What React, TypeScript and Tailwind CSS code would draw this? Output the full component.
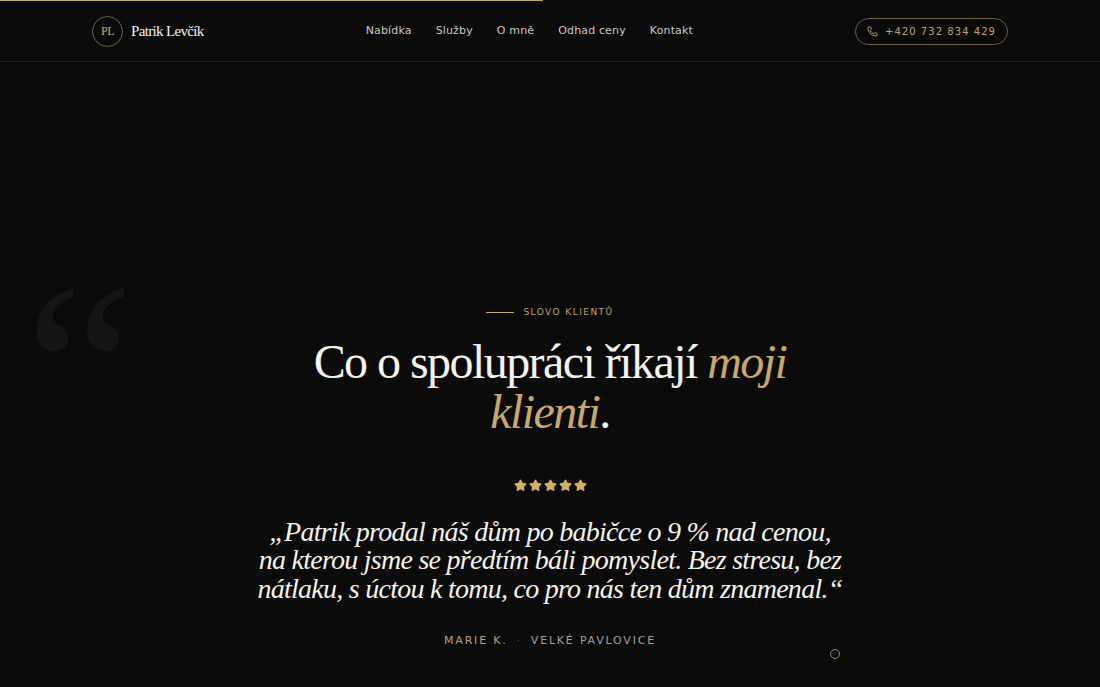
import { Phone, Star } from 'lucide-react';

const navLinks = ['Nabídka', 'Služby', 'O mně', 'Odhad ceny', 'Kontakt'];

export default function App() {
    return (
        <div className="relative h-[687px] w-full overflow-hidden bg-[#0b0b0c] font-['DejaVu_Sans',sans-serif] antialiased">
            {/* Scroll progress */}
            <div className="absolute left-0 top-0 h-px w-[543px] bg-[#c9a96a]" />

            {/* Header */}
            <header className="flex h-[62px] items-center justify-between border-b border-[#242424] px-[92px] pt-px">
                <div className="flex items-center gap-[8px]">
                    <div className="flex h-[31px] w-[31px] items-center justify-center rounded-full border border-[#6f5f3f] font-['Liberation_Serif',serif] text-xs tracking-[-0.5px] text-[#c9a96a]">
                        PL
                    </div>
                    <span className="font-['Liberation_Serif',serif] text-[15px] tracking-[-0.66px] text-[#f5f2ea]">Patrik Levčík</span>
                </div>
                <nav className="flex items-center gap-[24px]">
                    {navLinks.map((link) => (
                        <a key={link} className="text-[11px] tracking-[0.15px] text-[#c8c8c8]">
                            {link}
                        </a>
                    ))}
                </nav>
                <div className="flex h-[27px] w-[153px] items-center justify-center gap-[7px] rounded-full border border-[#6f5f3f] text-[10px] tracking-[1.05px] text-[#bfa26a]">
                    <Phone size={11} strokeWidth={2} />
                    +420 732 834 429
                </div>
            </header>

            {/* Big quote mark */}
            <div className="absolute left-[25px] top-[246px] font-['Liberation_Serif',serif] text-[246px] leading-none text-[#151515]">
                “
            </div>

            {/* Testimonials */}
            <section className="flex flex-col items-center pt-[244px] text-center">
                <div className="flex items-center gap-[9px]">
                    <span className="h-px w-[28px] bg-[#c9a96a]" />
                    <span className="text-[9px] tracking-[1.45px] text-[#bfa26a]">SLOVO KLIENTŮ</span>
                </div>
                <h2 className="mt-[17px] w-[560px] font-['Liberation_Serif',serif] text-[48px] leading-[50px] tracking-[-1.55px] text-[#f5f2ea]">
                    Co o spolupráci říkají <em className="text-[#c9a96a]">moji klienti</em>.
                </h2>
                <div className="mt-[42px] flex gap-[2px] text-[#d4ae64]">
                    {[0, 1, 2, 3, 4].map((i) => (
                        <Star key={i} size={13} fill="currentColor" strokeWidth={2} />
                    ))}
                </div>
                <p className="mt-[26px] w-[588px] font-['Liberation_Serif',serif] text-[28px] italic leading-[28.6px] tracking-[-0.74px] text-[#f5f2ea]">
                    „Patrik prodal náš dům po babičce o 9 % nad cenou, na kterou jsme se předtím báli pomyslet. Bez stresu, bez nátlaku, s úctou k tomu, co pro nás ten dům znamenal.“
                </p>
                <div className="mt-[30px] flex items-center gap-[9px] text-[11px] tracking-[1.8px]">
                    <span className="text-[#bfa26a]">MARIE K.</span>
                    <span className="text-[#555]">·</span>
                    <span className="text-[#a0a0a0]">VELKÉ PAVLOVICE</span>
                </div>
            </section>

            {/* Cursor ring */}
            <div className="absolute left-[830px] top-[649px] h-[10px] w-[10px] rounded-full border border-[#a88d58]" />
        </div>
    );
}
